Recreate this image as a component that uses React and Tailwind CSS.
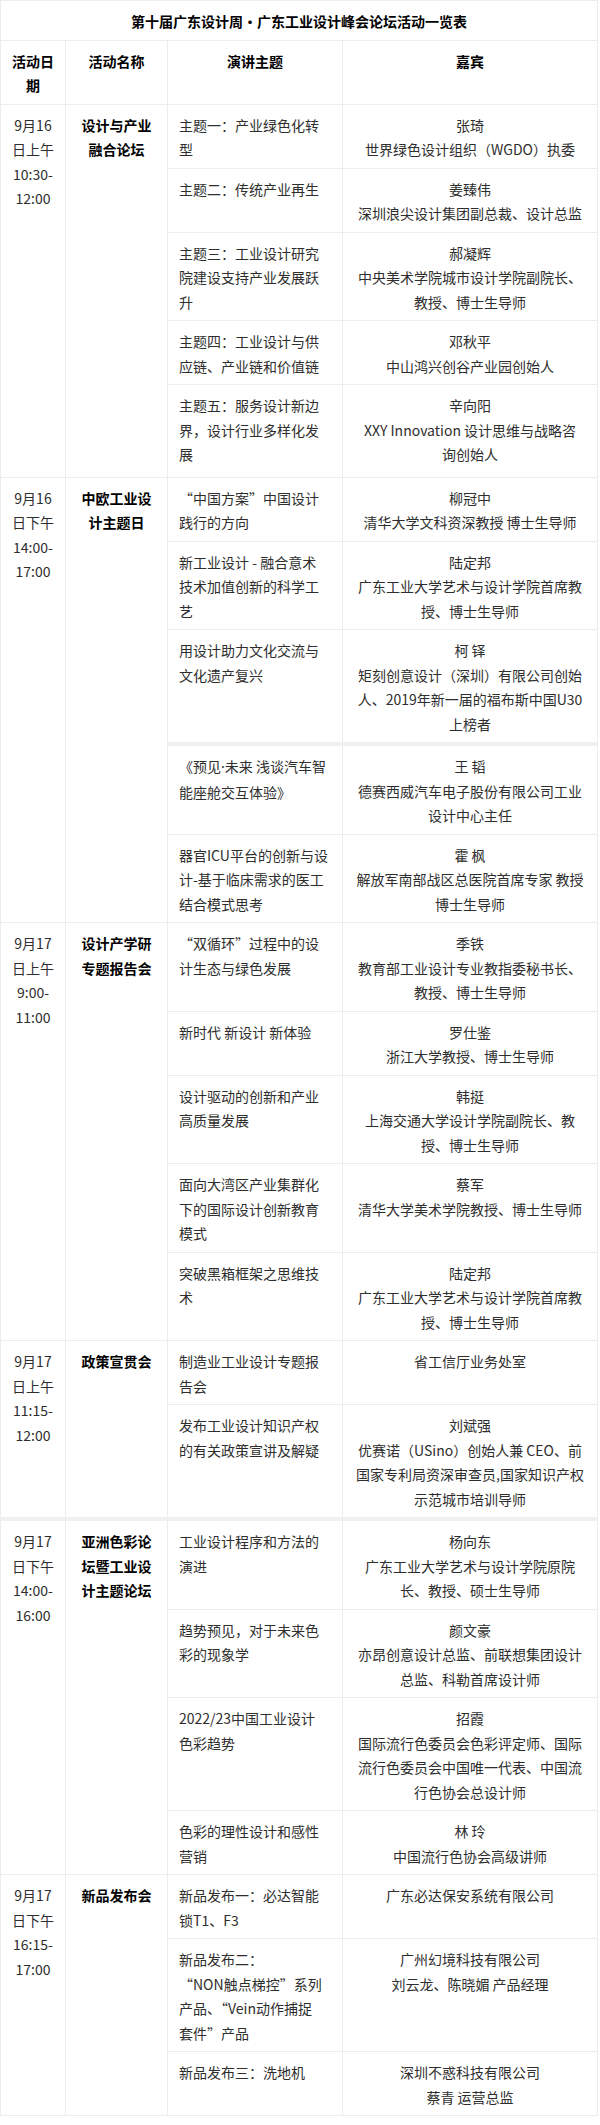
import React from "react";

const Dot = () => <span className="font-['Noto_Sans',sans-serif]">·</span>;

const groups = [
  {
    date: ["9月16", "日上午", "10:30-", "12:00"],
    name: ["设计与产业", "融合论坛"],
    rows: [
      { t: ["主题一：产业绿色化转", "型"], g: ["张琦", "世界绿色设计组织（WGDO）执委"] },
      { t: ["主题二：传统产业再生"], g: ["姜臻伟", "深圳浪尖设计集团副总裁、设计总监"] },
      { t: ["主题三：工业设计研究", "院建设支持产业发展跃", "升"], g: ["郝凝辉", "中央美术学院城市设计学院副院长、", "教授、博士生导师"] },
      { t: ["主题四：工业设计与供", "应链、产业链和价值链"], g: ["邓秋平", "中山鸿兴创谷产业园创始人"] },
      { t: ["主题五：服务设计新边", "界，设计行业多样化发", "展"], g: ["辛向阳", "XXY Innovation 设计思维与战略咨", "询创始人"], tall: true },
    ],
  },
  {
    date: ["9月16", "日下午", "14:00-", "17:00"],
    name: ["中欧工业设", "计主题日"],
    rows: [
      { t: ["“中国方案”中国设计", "践行的方向"], g: ["柳冠中", "清华大学文科资深教授 博士生导师"] },
      { t: ["新工业设计 - 融合意术", "技术加值创新的科学工", "艺"], g: ["陆定邦", "广东工业大学艺术与设计学院首席教", "授、博士生导师"] },
      { t: ["用设计助力文化交流与", "文化遗产复兴"], g: ["柯 铎", "矩刻创意设计（深圳）有限公司创始", "人、2019年新一届的福布斯中国U30", "上榜者"], dbl: true },
      {
        t: [
          <>
            《预见<Dot />未来 浅谈汽车智
          </>,
          "能座舱交互体验》",
        ],
        g: ["王 韬", "德赛西威汽车电子股份有限公司工业", "设计中心主任"],
      },
      { t: ["器官ICU平台的创新与设", "计-基于临床需求的医工", "结合模式思考"], g: ["霍 枫", "解放军南部战区总医院首席专家 教授", "博士生导师"] },
    ],
  },
  {
    date: ["9月17", "日上午", "9:00-", "11:00"],
    name: ["设计产学研", "专题报告会"],
    rows: [
      { t: ["“双循环”过程中的设", "计生态与绿色发展"], g: ["季铁", "教育部工业设计专业教指委秘书长、", "教授、博士生导师"] },
      { t: ["新时代 新设计 新体验"], g: ["罗仕鉴", "浙江大学教授、博士生导师"] },
      { t: ["设计驱动的创新和产业", "高质量发展"], g: ["韩挺", "上海交通大学设计学院副院长、教", "授、博士生导师"] },
      { t: ["面向大湾区产业集群化", "下的国际设计创新教育", "模式"], g: ["蔡军", "清华大学美术学院教授、博士生导师"] },
      { t: ["突破黑箱框架之思维技", "术"], g: ["陆定邦", "广东工业大学艺术与设计学院首席教", "授、博士生导师"] },
    ],
  },
  {
    date: ["9月17", "日上午", "11:15-", "12:00"],
    name: ["政策宣贯会"],
    dblEnd: true,
    rows: [
      { t: ["制造业工业设计专题报", "告会"], g: ["省工信厅业务处室"] },
      { t: ["发布工业设计知识产权", "的有关政策宣讲及解疑"], g: ["刘斌强", "优赛诺（USino）创始人兼 CEO、前", "国家专利局资深审查员,国家知识产权", "示范城市培训导师"], dbl: true },
    ],
  },
  {
    date: ["9月17", "日下午", "14:00-", "16:00"],
    name: ["亚洲色彩论", "坛暨工业设", "计主题论坛"],
    rows: [
      { t: ["工业设计程序和方法的", "演进"], g: ["杨向东", "广东工业大学艺术与设计学院原院", "长、教授、硕士生导师"] },
      { t: ["趋势预见，对于未来色", "彩的现象学"], g: ["颜文豪", "亦昂创意设计总监、前联想集团设计", "总监、科勒首席设计师"] },
      { t: ["2022/23中国工业设计", "色彩趋势"], g: ["招霞", "国际流行色委员会色彩评定师、国际", "流行色委员会中国唯一代表、中国流", "行色协会总设计师"] },
      { t: ["色彩的理性设计和感性", "营销"], g: ["林 玲", "中国流行色协会高级讲师"] },
    ],
  },
  {
    date: ["9月17", "日下午", "16:15-", "17:00"],
    name: ["新品发布会"],
    rows: [
      { t: ["新品发布一：必达智能", "锁T1、F3"], g: ["广东必达保安系统有限公司"] },
      { t: ["新品发布二：", "“NON触点梯控”系列", "产品、“Vein动作捕捉", "套件”产品"], g: ["广州幻境科技有限公司", "刘云龙、陈晓媚 产品经理"] },
      { t: ["新品发布三：洗地机"], g: ["深圳不惑科技有限公司", "蔡青 运营总监"] },
    ],
  },
];

function Lines({ lines }) {
  return (
    <>
      {lines.map((l, i) => (
        <div key={i} className="whitespace-pre">
          {l}
        </div>
      ))}
    </>
  );
}

const cell = "border border-[#ececec] align-top pt-[8px] pb-[6px] whitespace-nowrap";
const dblCls = "border-b-[4px] border-b-double border-b-[#f0f0f0]";

export default function App() {
  return (
    <div className="w-[600px] bg-white font-['Noto_Sans_CJK_SC','Microsoft_YaHei',sans-serif] text-[14px] leading-[24.5px] text-[#2e2e2e]">
      <table className="table-fixed border-collapse w-[597px]">
        <colgroup>
          <col className="w-[65px]" />
          <col className="w-[102px]" />
          <col className="w-[175px]" />
          <col className="w-[255px]" />
        </colgroup>
        <tbody>
          <tr>
            <td colSpan={4} className={`${cell} px-[10px] text-center font-bold text-black`}>
              第十届广东设计周•广东工业设计峰会论坛活动一览表
            </td>
          </tr>
          <tr>
            <td className={`${cell} px-[10px] text-center font-bold text-black`}>
              <Lines lines={["活动日", "期"]} />
            </td>
            <td className={`${cell} px-[10px] text-center font-bold text-black`}>活动名称</td>
            <td className={`${cell} px-[10px] text-center font-bold text-black`}>演讲主题</td>
            <td className={`${cell} px-[10px] text-center font-bold text-black`}>嘉宾</td>
          </tr>
          {groups.map((grp, gi) =>
            grp.rows.map((r, ri) => {
              const rowDbl = r.dbl ? dblCls : "";
              const groupDbl = grp.dblEnd ? dblCls : "";
              const extra = r.tall ? "pb-[10px]" : "";
              return (
                <tr key={`${gi}-${ri}`}>
                  {ri === 0 && (
                    <>
                      <td rowSpan={grp.rows.length} className={`${cell} px-[4px] text-center ${groupDbl}`}>
                        <Lines lines={grp.date} />
                      </td>
                      <td rowSpan={grp.rows.length} className={`${cell} px-[10px] text-center font-bold text-black ${groupDbl}`}>
                        <Lines lines={grp.name} />
                      </td>
                    </>
                  )}
                  <td className={`${cell} pl-[11px] pr-[6px] text-left ${rowDbl} ${extra}`}>
                    <Lines lines={r.t} />
                  </td>
                  <td className={`${cell} px-[6px] text-center ${rowDbl} ${extra}`}>
                    <Lines lines={r.g} />
                  </td>
                </tr>
              );
            })
          )}
        </tbody>
      </table>
    </div>
  );
}
